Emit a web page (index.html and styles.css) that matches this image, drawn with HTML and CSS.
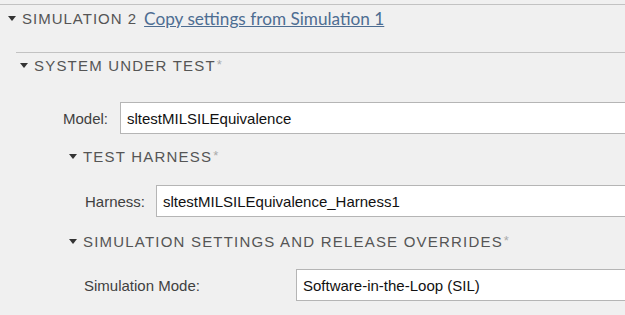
FILE: index.html
```html
<!DOCTYPE html>
<html lang="en">
<head>
    <meta charset="UTF-8">
    <title>Simulation 2</title>
    <link rel="stylesheet" href="styles.css">
</head>
<body>
    <section class="sim">
        <div class="sim__head">
            <span class="caret"></span>
            <span class="title">SIMULATION 2</span>
            <a class="copy" href="#">Copy settings from Simulation 1</a>
        </div>

        <section class="sut">
            <div class="sut__head">
                <span class="caret"></span>
                <span class="title">SYSTEM UNDER TEST<sup>*</sup></span>
            </div>

            <div class="field field--model">
                <label>Model:</label>
                <input class="box" value="sltestMILSILEquivalence">
            </div>

            <div class="sub">
                <div class="sub__head">
                    <span class="caret"></span>
                    <span class="title">TEST HARNESS<sup>*</sup></span>
                </div>
                <div class="field field--harness">
                    <label>Harness:</label>
                    <input class="box" value="sltestMILSILEquivalence_Harness1">
                </div>
            </div>

            <div class="sub sub--settings">
                <div class="sub__head">
                    <span class="caret"></span>
                    <span class="title">SIMULATION SETTINGS AND RELEASE OVERRIDES<sup>*</sup></span>
                </div>
                <div class="field field--mode">
                    <label>Simulation Mode:</label>
                    <input class="box" value="Software-in-the-Loop (SIL)">
                </div>
            </div>
        </section>
    </section>
</body>
</html>
```

FILE: styles.css
```css
html, * {
    box-sizing: border-box;
    margin: 0;
    padding: 0;
}

body {
    background: #f0f0f0;
    font-family: 'Liberation Sans', Arial, sans-serif;
    padding-top: 4px;
    overflow: hidden;
}

.sim {
    border-top: 1px solid #c2c2c2;
}

.sim__head,
.sut__head,
.sub__head {
    display: flex;
    align-items: center;
    height: 20px;
}

.sim__head {
    margin-top: 2px;
    padding-left: 8px;
    height: 22px;
}

.caret {
    width: 0;
    height: 0;
    border-left: 4px solid transparent;
    border-right: 4px solid transparent;
    border-top: 5px solid #333;
    margin-right: 6px;
}

.title {
    font-size: 15px;
    letter-spacing: 1.2px;
    color: #555;
    white-space: nowrap;
}

.sim__head .title {
    letter-spacing: 1px;
}

.title sup {
    font-size: 13px;
    color: #aaa;
    letter-spacing: 0;
    vertical-align: 2px;
    margin-left: 1px;
}

.copy {
    font-family: Lato, 'Open Sans', sans-serif;
    font-size: 17.2px;
    color: #4d6d92;
    margin-left: 7px;
    white-space: nowrap;
}

.sut {
    margin-top: 23px;
    margin-left: 16px;
    border-top: 1px solid #c2c2c2;
    padding-top: 2px;
}

.sut__head {
    padding-left: 4px;
}

.field {
    display: flex;
    align-items: center;
    margin-right: -20px;
}

.field label {
    font-size: 15px;
    color: #404040;
    flex: none;
}

.box {
    flex: 1;
    height: 32px;
    border: 1px solid #b5b5b5;
    background: #fff;
    padding: 0 6px;
    font-family: 'Liberation Sans', Arial, sans-serif;
    font-size: 15px;
    color: #111;
    outline: none;
}

.field--model {
    margin-top: 27px;
    padding-left: 47px;
}

.field--model label {
    width: 57px;
}

.sub {
    margin-top: 12px;
    padding-left: 53px;
}

.sub--settings {
    margin-top: 14px;
}

.field--harness {
    margin-top: 19px;
    padding-left: 16px;
}

.field--harness label {
    width: 71px;
}

.field--mode {
    margin-top: 18px;
    padding-left: 15px;
}

.field--mode label {
    width: 212px;
}
```
